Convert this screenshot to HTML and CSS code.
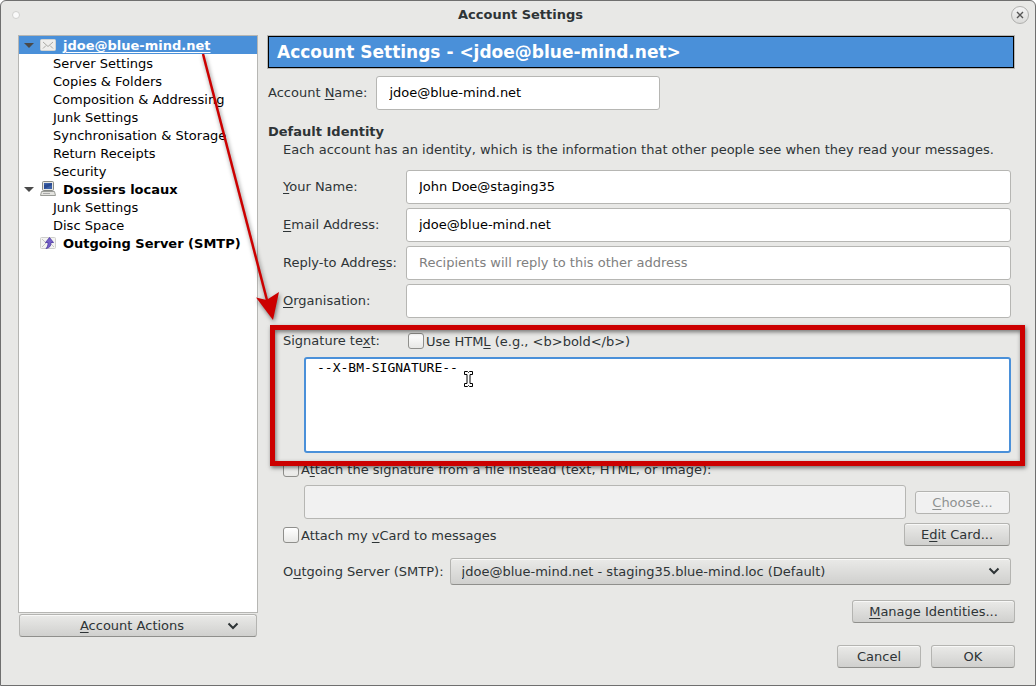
FILE: index.html
```html
<!DOCTYPE html>
<html lang="en">
<head>
<meta charset="utf-8">
<title>Account Settings</title>
<link rel="stylesheet" href="styles.css">
</head>
<body>
<div class="window">
  <header class="titlebar">
    <span class="title-dot"></span>
    <h1 class="title">Account Settings</h1>
    <button class="close" type="button" aria-label="Close">
      <svg width="8" height="8" viewBox="0 0 8 8"><path d="M1 1l6 6M7 1l-6 6" stroke="#555" stroke-width="1.4" fill="none"/></svg>
    </button>
  </header>

  <div class="content">
    <aside class="sidebar">
      <ul class="tree">
        <li class="node selected">
          <svg class="twisty" width="10" height="5" viewBox="0 0 10 5"><path d="M0 0h10L5 5z" fill="#4a4a4a"/></svg>
          <svg class="icon" width="16" height="16" viewBox="0 0 16 16"><rect x=".5" y="2.5" width="15" height="11" rx="1" fill="#eeeeec" stroke="#d3d3d0"/><path d="M3 5l5 4.5L13 5M3 11.500l3-3M13 11.500l-3-3" fill="none" stroke="#aaaaa6"/></svg>
          <span class="node-label">jdoe@blue-mind.net</span>
        </li>
        <li class="leaf">Server Settings</li>
        <li class="leaf">Copies &amp; Folders</li>
        <li class="leaf">Composition &amp; Addressing</li>
        <li class="leaf">Junk Settings</li>
        <li class="leaf">Synchronisation &amp; Storage</li>
        <li class="leaf">Return Receipts</li>
        <li class="leaf">Security</li>
        <li class="node">
          <svg class="twisty" width="10" height="5" viewBox="0 0 10 5"><path d="M0 0h10L5 5z" fill="#4a4a4a"/></svg>
          <svg class="icon" width="16" height="16" viewBox="0 0 16 16"><rect x="2.500" y=".5" width="11" height="9" rx="1" fill="#e6e6e2" stroke="#888a85"/><rect x="4" y="2" width="8" height="6" fill="#3d62a8"/><path d="M4 8V4l8-2v2z" fill="#2a4a90"/><path d="M6 9h4v2H6z" fill="#888a85"/><path d="M1.500 10.500h13l1 4H.5z" fill="#e4e4e0" stroke="#9a9c97"/><path d="M3 12.500h7" stroke="#aaa"/></svg>
          <span class="node-label">Dossiers locaux</span>
        </li>
        <li class="leaf">Junk Settings</li>
        <li class="leaf">Disc Space</li>
        <li class="node">
          <span class="twisty-space"></span>
          <svg class="icon" width="16" height="16" viewBox="0 0 16 16"><rect x=".5" y="2.500" width="15" height="11" rx="1" fill="#f4f4f2" stroke="#cfcfcc"/><path d="M2 12l4-4M14 12l-3-3M2 4l4 4" stroke="#c5c5c2"/><path d="M9.500 2.500l4 5h-2.500c0 3.500-1.500 5.500-5 6 1.500-1.500 2-3 2-6H5.500z" fill="#7460c8" stroke="#4a35a0" stroke-width=".8"/></svg>
          <span class="node-label">Outgoing Server (SMTP)</span>
        </li>
      </ul>
      <button class="btn actions" type="button"><span><u>A</u>ccount Actions</span>
        <svg width="12" height="8" viewBox="0 0 12 8"><path d="M1.500 1.500L6 6l4.500-4.500" fill="none" stroke="#2e3436" stroke-width="2"/></svg>
      </button>
    </aside>

    <main class="panel">
      <h2 class="banner">Account Settings - &lt;jdoe@blue-mind.net&gt;</h2>
      <div class="account-row">
        <label for="account">Account <u>N</u>ame:</label>
        <input class="field" id="account" type="text" value="jdoe@blue-mind.net">
      </div>
      <section class="identity">
        <h3 class="heading">Default Identity</h3>
        <p class="note">Each account has an identity, which is the information that other people see when they read your messages.</p>
        <div class="form">
          <label for="name"><u>Y</u>our Name:</label>
          <input class="field" id="name" type="text" value="John Doe@staging35">
          <label for="email"><u>E</u>mail Address:</label>
          <input class="field" id="email" type="text" value="jdoe@blue-mind.net">
          <label for="reply">Reply-to Addre<u>s</u>s:</label>
          <input class="field" id="reply" type="text" placeholder="Recipients will reply to this other address">
          <label for="org"><u>O</u>rganisation:</label>
          <input class="field" id="org" type="text">
        </div>
        <div class="signature">
          <div class="signature-head">
            <label class="signature-label" for="signature">Signature te<u>x</u>t:</label>
            <input class="check" id="html" type="checkbox">
            <label for="html">Use HTM<u>L</u> (e.g., &lt;b&gt;bold&lt;/b&gt;)</label>
          </div>
          <textarea class="signature-text" id="signature" spellcheck="false">--X-BM-SIGNATURE--</textarea>
          <div class="highlight"></div>
          <svg class="arrow" width="100" height="280" viewBox="0 0 100 280"><path d="M19 6L84 256" stroke="#c00" stroke-width="2.500"/><path d="M72 249.500L82.500 252 95 244 89 272z" fill="#c00"/></svg>
          <svg class="cursor" width="9" height="16" viewBox="0 0 9 16"><path d="M.5.500h3l1 1 1-1h3v3H6v9h2.500v3h-3l-1-1-1 1h-3v-3H3v-9H.5z" fill="#fff" stroke="#000"/></svg>
        </div>
        <div class="check-row">
          <input class="check" id="attach" type="checkbox">
          <label for="attach">A<u>t</u>tach the signature from a file instead (text, HTML, or image):</label>
        </div>
        <div class="file-row">
          <input class="field" type="text" aria-label="Signature file" disabled>
          <button class="btn choose" type="button" disabled><u>C</u>hoose...</button>
        </div>
        <div class="card-row">
          <input class="check" id="vcard" type="checkbox">
          <label for="vcard">Attach my <u>v</u>Card to messages</label>
          <button class="btn edit" type="button">E<u>d</u>it Card...</button>
        </div>
        <div class="server-row">
          <label for="server">O<u>u</u>tgoing Server (SMTP):</label>
          <div class="select-wrap">
            <select class="server" id="server"><option>jdoe@blue-mind.net - staging35.blue-mind.loc (Default)</option></select>
            <svg class="chevron" width="12" height="8" viewBox="0 0 12 8"><path d="M1.500 1.500L6 6l4.500-4.500" fill="none" stroke="#2e3436" stroke-width="2"/></svg>
          </div>
        </div>
      </section>
      <div class="manage-row"><button class="btn manage" type="button"><u>M</u>anage Identities...</button></div>
    </main>
  </div>

  <footer class="footer">
    <button class="btn dialog" type="button">Cancel</button>
    <button class="btn dialog" type="button">OK</button>
  </footer>
</div>
</body>
</html>
```
FILE: styles.css
```css
* { box-sizing: border-box; }

body {
  margin: 0;
  background: #fff;
  color: #2e3436;
  font: 13px/18px "DejaVu Sans", sans-serif;
}

h1, h2, h3, p, ul { margin: 0; padding: 0; }
ul { list-style: none; }
label { white-space: nowrap; }
u { text-underline-offset: 2px; }

input, textarea, button, select {
  margin: 0;
  color: inherit;
  font: inherit;
}

.window {
  display: flex;
  flex-direction: column;
  min-height: 100vh;
  border: 1px solid #6f6f6f;
  border-radius: 6px 6px 0 0;
  background: #e8e8e6;
}

.titlebar {
  display: flex;
  align-items: center;
  justify-content: space-between;
  height: 27px;
  padding: 0 6px 0 11px;
}

.title-dot {
  width: 8px;
  height: 8px;
  margin-right: 10px;
  border: 1px solid #d0d0ce;
  border-radius: 50%;
  background: #fafafa;
}

.title { font-size: 13px; }

.close {
  display: flex;
  align-items: center;
  justify-content: center;
  width: 18px;
  height: 18px;
  padding: 0;
  border: 1px solid #b0b0ae;
  border-radius: 50%;
  background: linear-gradient(#f4f4f4, #dcdcda);
}

.content {
  display: flex;
  flex: 1;
  gap: 10px;
  padding: 7px 20px 0 17px;
}

.sidebar {
  display: flex;
  flex: none;
  flex-direction: column;
  gap: 1px;
  width: 240px;
}

.tree {
  height: 578px;
  border: 1px solid #b6b6b3;
  background: #fff;
  color: #000;
}

.leaf {
  height: 18px;
  padding-left: 34px;
  line-height: 20px;
  white-space: nowrap;
}

.node {
  display: flex;
  align-items: center;
  height: 18px;
  padding-left: 5px;
  font-weight: bold;
  white-space: nowrap;
}

.node-label { padding-top: 2px; }
.twisty { margin-right: 6px; }
.twisty-space { width: 16px; }
.icon { margin-right: 7px; }

.selected { background: #4a90d9; color: #fff; }
.selected .node-label { text-decoration: underline; text-underline-offset: 2px; }

.btn {
  height: 23px;
  padding: 0 8px;
  border: 1px solid #b4b4b1;
  border-bottom-color: #8f8f8c;
  border-radius: 3px;
  background: linear-gradient(#eaeae8, #d0d0ce);
  box-shadow: inset 0 1px #f8f8f7;
  line-height: 21px;
  white-space: nowrap;
}

.btn:disabled {
  border-color: #b4b4b1;
  background: #f1f1f1;
  color: #8f9291;
}

.actions {
  display: flex;
  align-items: center;
  margin: 0 1px;
  padding-right: 17px;
}

.actions span { flex: 1; padding-left: 9px; }

.panel {
  display: flex;
  flex: 1;
  flex-direction: column;
  min-width: 0;
}

.banner {
  margin: 1px 1px 1px 0;
  height: 32px;
  padding: 0 8px;
  border: 1px solid #000;
  outline: 1px solid #b6b6b3;
  background: #4a90d9;
  color: #fff;
  font-size: 17px;
  line-height: 30px;
}

.account-row { display: flex; align-items: center; gap: 9px; margin-top: 7px; }
.account-row .field { width: 284px; }

.field {
  display: block;
  width: 100%;
  min-width: 0;
  height: 34px;
  padding: 0 12px 2px;
  border: 1px solid #b6b6b3;
  border-radius: 3px;
  background: #fff;
  color: #000;
}

.field:disabled { background: #f1f1f1; }
.field::placeholder { color: #808080; opacity: 1; }

.identity { margin-right: 4px; }
.heading { margin-top: 13px; font-size: 13px; }
.note { padding-left: 15px; white-space: nowrap; }

.form {
  display: grid;
  grid-template-columns: 114px 1fr;
  gap: 4px 9px;
  align-items: center;
  margin-top: 11px;
  padding-left: 15px;
}

.signature { position: relative; margin-top: 14px; padding-left: 15px; }
.signature-head { display: flex; align-items: center; height: 18px; }
.signature-label { width: 125px; }

.check {
  flex: none;
  width: 16px;
  height: 16px;
  margin-right: 2px;
  border: 1px solid #8f8f8c;
  border-radius: 3px;
  background: linear-gradient(#fff, #e8e8e6);
  appearance: none;
}

.check + label { padding-top: 2px; }

.signature-text {
  display: block;
  width: calc(100% - 21px);
  height: 96px;
  margin: 7px 0 0 21px;
  padding: 1px 11px;
  border: 2px solid #4a90d9;
  border-radius: 3px;
  outline: 0;
  background: #fff;
  color: #000;
  font: 13px/16px "DejaVu Sans Mono", monospace;
  resize: none;
}

.highlight {
  position: absolute;
  top: -7px;
  right: -14px;
  left: 2px;
  height: 141px;
  border: 5px solid #c00;
  box-shadow: 1px 2px 4px rgba(0, 0, 0, .5), inset 1px 2px 4px rgba(0, 0, 0, .5);
  pointer-events: none;
}

.arrow {
  position: absolute;
  top: -284px;
  left: -84px;
  filter: drop-shadow(1px 2px 2px rgba(0, 0, 0, .5));
  pointer-events: none;
}

.cursor { position: absolute; top: 39px; left: 196px; pointer-events: none; }

.check-row {
  display: flex;
  align-items: center;
  height: 18px;
  margin: 7px 0 0 15px;
}

.file-row {
  display: flex;
  align-items: center;
  gap: 9px;
  margin: 7px 0 0 21px;
  padding-left: 15px;
}

.file-row .field { flex: 1; }
.choose { width: 95px; margin-right: 1px; }

.card-row {
  display: flex;
  align-items: center;
  height: 24px;
  margin: 4px 1px 0 15px;
}

.edit { align-self: flex-start; width: 106px; margin-left: auto; }

.server-row {
  display: flex;
  align-items: center;
  gap: 6px;
  margin: 11px 0 0 15px;
}

.select-wrap { position: relative; flex: 1; }

.server {
  display: block;
  width: 100%;
  height: 27px;
  padding: 0 11px;
  border: 1px solid #b4b4b1;
  border-bottom-color: #8f8f8c;
  border-radius: 3px;
  background: linear-gradient(#eaeae8, #d0d0ce);
  box-shadow: inset 0 1px #f8f8f7;
  appearance: none;
}

.chevron { position: absolute; top: 9px; right: 11px; pointer-events: none; }

.manage-row { display: flex; justify-content: flex-end; margin-top: 15px; }
.manage { width: 163px; }

.footer {
  display: flex;
  justify-content: flex-end;
  gap: 10px;
  padding: 8px 20px 17px;
}

.dialog { width: 84px; }
```
